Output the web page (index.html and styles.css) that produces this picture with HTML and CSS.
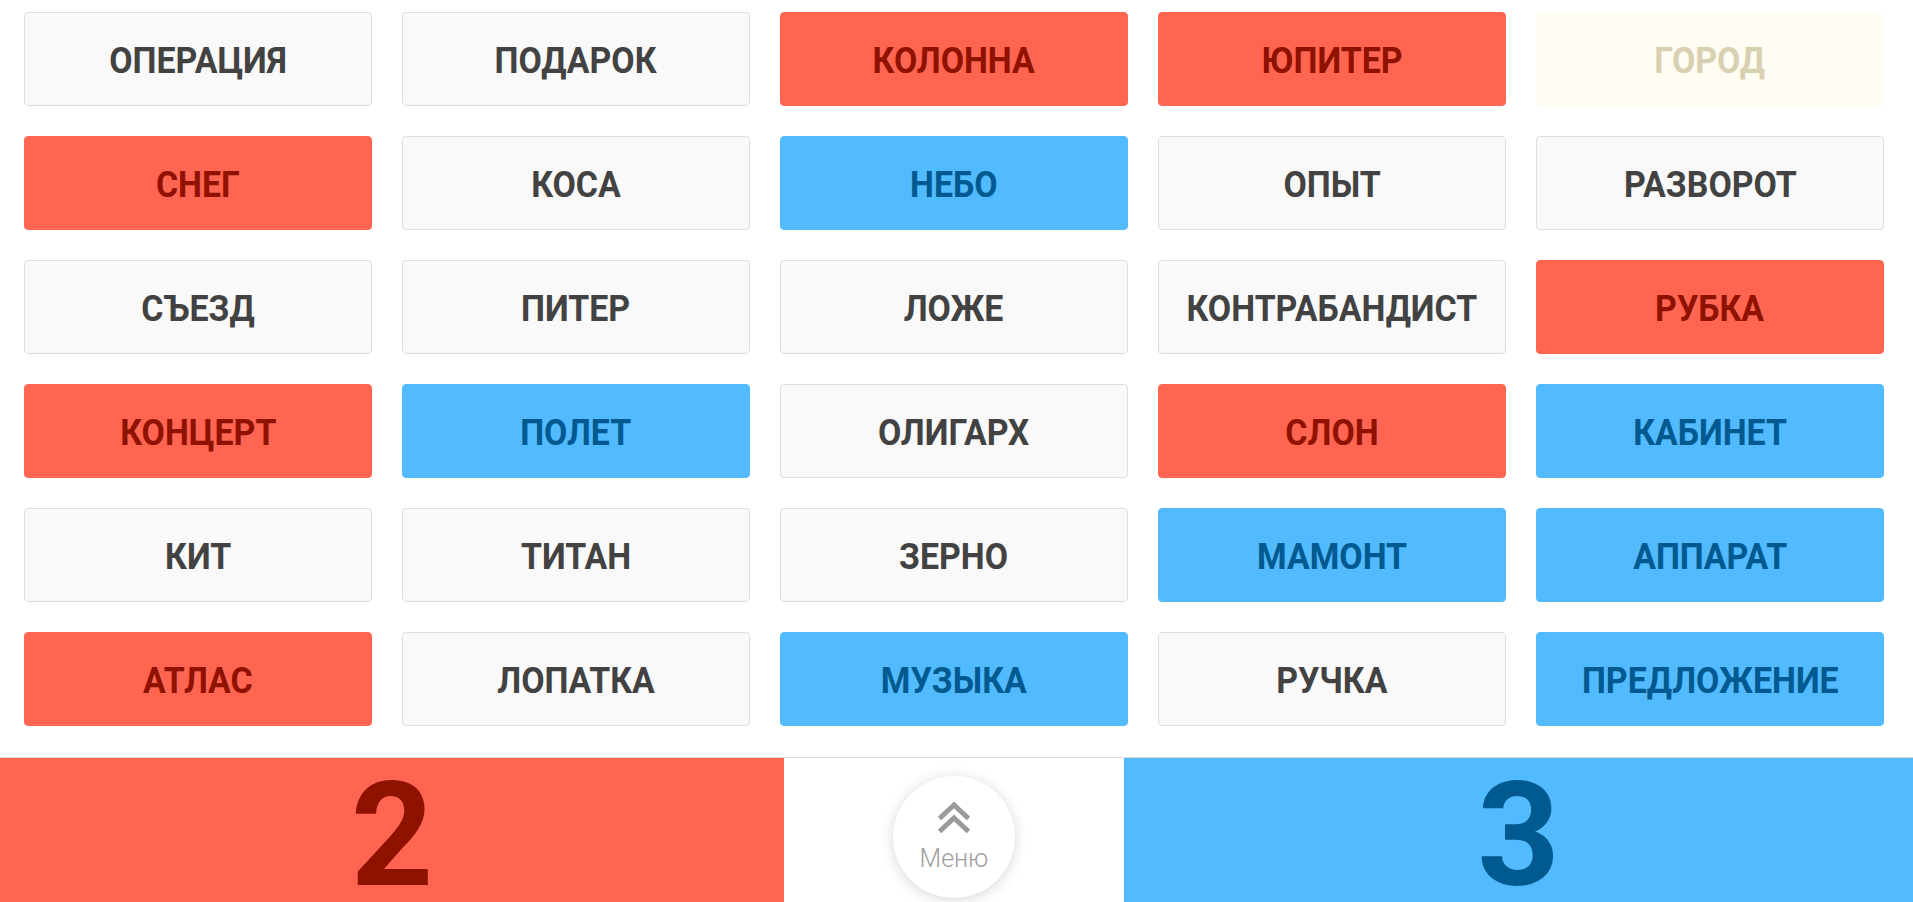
FILE: index.html
```html
<!DOCTYPE html>
<html lang="ru">
<head>
<meta charset="utf-8">
<title>Игра</title>
<link rel="stylesheet" href="styles.css">
</head>
<body>
<main class="board">
  <div class="card"><span class="word">ОПЕРАЦИЯ</span></div>
  <div class="card"><span class="word">ПОДАРОК</span></div>
  <div class="card red"><span class="word">КОЛОННА</span></div>
  <div class="card red"><span class="word">ЮПИТЕР</span></div>
  <div class="card beige"><span class="word">ГОРОД</span></div>

  <div class="card red"><span class="word">СНЕГ</span></div>
  <div class="card"><span class="word">КОСА</span></div>
  <div class="card blue"><span class="word">НЕБО</span></div>
  <div class="card"><span class="word">ОПЫТ</span></div>
  <div class="card"><span class="word">РАЗВОРОТ</span></div>

  <div class="card"><span class="word">СЪЕЗД</span></div>
  <div class="card"><span class="word">ПИТЕР</span></div>
  <div class="card"><span class="word">ЛОЖЕ</span></div>
  <div class="card"><span class="word">КОНТРАБАНДИСТ</span></div>
  <div class="card red"><span class="word">РУБКА</span></div>

  <div class="card red"><span class="word">КОНЦЕРТ</span></div>
  <div class="card blue"><span class="word">ПОЛЕТ</span></div>
  <div class="card"><span class="word">ОЛИГАРХ</span></div>
  <div class="card red"><span class="word">СЛОН</span></div>
  <div class="card blue"><span class="word">КАБИНЕТ</span></div>

  <div class="card"><span class="word">КИТ</span></div>
  <div class="card"><span class="word">ТИТАН</span></div>
  <div class="card"><span class="word">ЗЕРНО</span></div>
  <div class="card blue"><span class="word">МАМОНТ</span></div>
  <div class="card blue"><span class="word">АППАРАТ</span></div>

  <div class="card red"><span class="word">АТЛАС</span></div>
  <div class="card"><span class="word">ЛОПАТКА</span></div>
  <div class="card blue"><span class="word">МУЗЫКА</span></div>
  <div class="card"><span class="word">РУЧКА</span></div>
  <div class="card blue"><span class="word">ПРЕДЛОЖЕНИЕ</span></div>
</main>
<footer class="score">
  <div class="side side-red">2</div>
  <div class="middle">
    <button class="menu-btn" type="button">
      <svg class="chev" width="34" height="32" viewBox="0 0 34 32" aria-hidden="true">
        <polyline points="2.5,16.5 17,3 31.5,16.5" fill="none" stroke="#9a9a9a" stroke-width="5"/>
        <polyline points="2.5,29.5 17,16 31.5,29.5" fill="none" stroke="#9a9a9a" stroke-width="5"/>
      </svg>
      <span class="menu-label">Меню</span>
    </button>
  </div>
  <div class="side side-blue side-fill">3</div>
</footer>
</body>
</html>
```
FILE: styles.css
```css
* { box-sizing: border-box; }
html, body { margin: 0; padding: 0; }
body {
  background: #ffffff;
  font-family: "Roboto", "Liberation Sans", sans-serif;
  width: 1913px;
  height: 902px;
  overflow: hidden;
}
.board {
  display: grid;
  grid-template-columns: repeat(5, 348px);
  grid-auto-rows: 94px;
  column-gap: 30px;
  row-gap: 30px;
  padding: 12px 0 0 24px;
  height: 757px;
}
.card {
  display: flex;
  align-items: center;
  justify-content: center;
  background: #f9f9f9;
  border: 1px solid #dedede;
  border-radius: 4px;
  color: #424242;
  font-weight: 700;
  font-size: 37px;
}
.word {
  display: inline-block;
  transform: scaleX(0.915);
  white-space: nowrap;
  padding-top: 2px;
}
.card.red {
  background: #ff6551;
  border-color: #ff6551;
  color: #8f1100;
}
.card.blue {
  background: #52baff;
  border-color: #52baff;
  color: #00598f;
}
.card.beige {
  background: #fffcf3;
  border-color: #fffcf3;
  color: #d9d0b2;
}
.score {
  display: flex;
  height: 145px;
  border-top: 1px solid #dcdcdc;
}
.side {
  width: 784px;
  text-align: center;
  font-weight: 700;
  font-size: 144px;
  line-height: 120px;
  padding-top: 18px;
}
.side-fill { flex: 1; width: auto; }
.side-red { background: #ff6551; color: #8f1100; }
.side-blue { background: #52baff; color: #00598f; }
.middle {
  width: 340px;
  display: flex;
  justify-content: center;
  padding-top: 18px;
  background: #ffffff;
}
.menu-btn {
  width: 122px;
  height: 122px;
  border-radius: 50%;
  border: none;
  background: #ffffff;
  box-shadow: 0 2px 14px rgba(0, 0, 0, 0.16);
  display: flex;
  flex-direction: column;
  align-items: center;
  padding: 26px 0 0 0;
  margin: 0;
  cursor: pointer;
}
.chev { display: block; }
.menu-label {
  margin-top: 11px;
  font-family: "Roboto", "Liberation Sans", sans-serif;
  font-weight: 300;
  font-size: 25px;
  line-height: 28px;
  color: #9e9e9e;
}
```
